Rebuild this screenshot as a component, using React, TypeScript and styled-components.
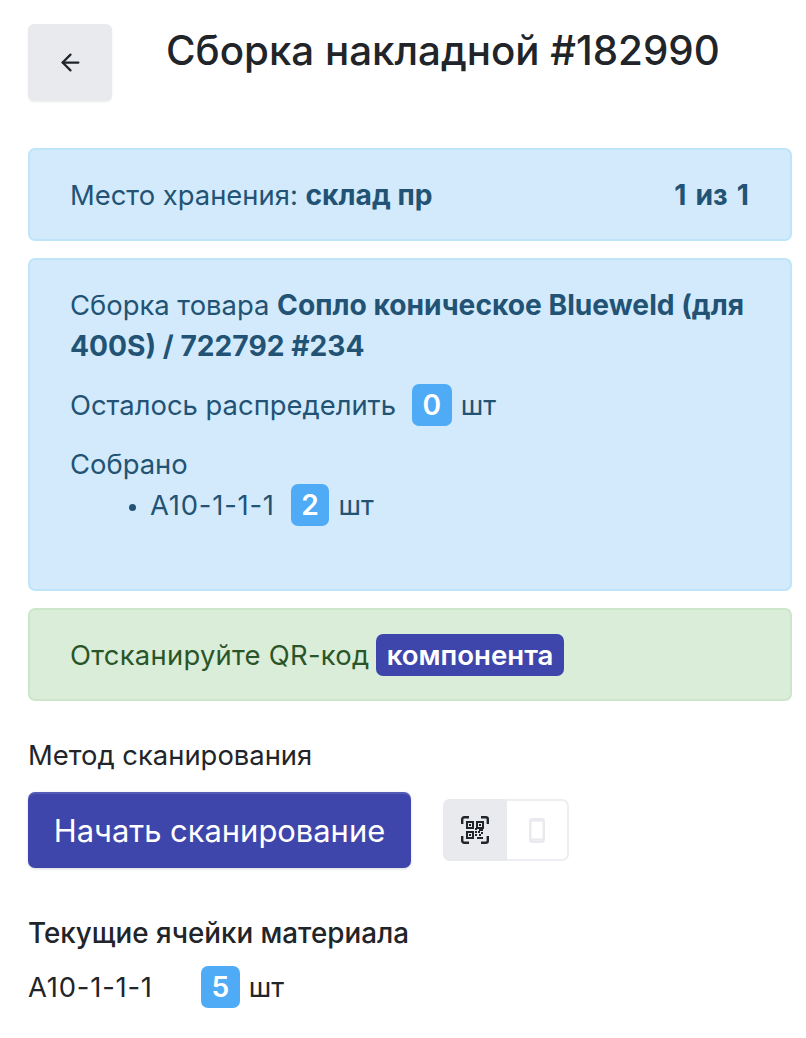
import React from 'react';
import styled, { createGlobalStyle } from 'styled-components';
import { ArrowLeft } from 'lucide-react';

const GlobalStyle = createGlobalStyle`
  html, body {
    margin: 0;
    padding: 0;
    background: #fff;
  }
  body {
    font-family: Inter, "Noto Sans", sans-serif;
    font-size: 27.4px;
    line-height: 41px;
    color: #212529;
  }
  b {
    font-size: 28.2px;
    line-height: 41px;
  }
`;

const Page = styled.div`
  padding: 24px 14px 30px 28px;
`;

const Header = styled.div`
  display: flex;
  align-items: flex-start;
  margin-bottom: 47px;
`;

const BackButton = styled.button`
  width: 84px;
  height: 77px;
  border: none;
  border-radius: 6px;
  background: #e9eaee;
  box-shadow: 0 1px 2px rgba(0, 0, 0, 0.08);
  color: #212529;
  display: flex;
  align-items: center;
  justify-content: center;
  padding: 0;
`;

const Title = styled.h1`
  margin: 0 0 0 54px;
  font-size: 40.3px;
  line-height: 54px;
  font-weight: 500;
  color: #212529;
`;

const Alert = styled.div<{ $tone: 'info' | 'success' }>`
  box-sizing: border-box;
  border-radius: 7px;
  border: 2px solid ${(p) => (p.$tone === 'info' ? '#bfe5fa' : '#cde6cb')};
  background: ${(p) => (p.$tone === 'info' ? '#d2eafb' : '#d9edd8')};
  color: ${(p) => (p.$tone === 'info' ? '#225375' : '#2a5528')};
  padding: 25px 41px 23px 40px;
  margin-bottom: 17px;
`;

const SuccessAlert = styled(Alert)`
  margin-bottom: 34px;
`;

const StorageRow = styled.div`
  display: flex;
  justify-content: space-between;
`;

const StorageCount = styled.b`
  word-spacing: 2.5px;
`;

const Line = styled.div`
  margin-bottom: 18px;
`;

const Cell = styled.span`
  letter-spacing: 0.8px;
`;

const Prompt = styled.span`
  letter-spacing: 0.27px;
  margin-right: -1px;
`;

const Badge = styled.span<{ $indigo?: boolean }>`
  display: inline-block;
  background: ${(p) => (p.$indigo ? '#3e46ab' : '#4fabf5')};
  color: #fff;
  font-size: ${(p) => (p.$indigo ? '27.6px' : '28.2px')};
  font-weight: 600;
  line-height: 42px;
  height: 42px;
  vertical-align: top;
  padding: 0 10.5px;
  border-radius: 7px;
  margin: -1px 9px 0 0;
`;

const Gathered = styled.ul`
  margin: 0 0 40px;
  padding-left: 80px;
  li::marker {
    font-size: 22px;
  }
`;

const Label = styled.div<{ $medium?: boolean }>`
  font-weight: ${(p) => (p.$medium ? 500 : 400)};
  font-size: ${(p) => (p.$medium ? '27.8px' : '27.4px')};
`;

const ScanRow = styled.div`
  display: flex;
  align-items: center;
  margin: 16px 0 45px;
`;

const ScanButton = styled.button`
  width: 383px;
  height: 76px;
  border: none;
  border-radius: 7px;
  background: #3e46ab;
  box-shadow: inset 0 2px 0 rgba(255, 255, 255, 0.12), 0 1px 3px rgba(0, 0, 0, 0.15);
  color: #fff;
  font: inherit;
  font-size: 30.9px;
  padding: 0;
`;

const Toggle = styled.div`
  display: flex;
  margin-left: 32px;
  width: 126px;
  height: 62px;
  box-sizing: border-box;
  border: 2px solid #eceef2;
  border-radius: 7px;
`;

const ToggleItem = styled.div<{ $active?: boolean }>`
  flex: ${(p) => (p.$active ? '0 0 64px' : '1')};
  margin: ${(p) => (p.$active ? '-2px 0 -2px -2px' : '0')};
  display: flex;
  align-items: center;
  justify-content: center;
  border-radius: 7px 0 0 7px;
  background: ${(p) => (p.$active ? '#e9eaee' : 'transparent')};
`;

const CellRow = styled.div`
  display: flex;
  align-items: center;
  margin-top: 13px;
`;

const CellName = styled(Cell)`
  width: 173px;
`;

const Gap = styled.span`
  display: inline-block;
  width: 16px;
`;

const QrIcon = () => (
  <svg width="28" height="28" viewBox="0 0 28 28" fill="none" stroke="#212529" strokeWidth="2.4">
    <path d="M1.2 8V3.2a2 2 0 0 1 2-2H8M20 1.2h4.8a2 2 0 0 1 2 2V8M26.8 20v4.8a2 2 0 0 1-2 2H20M8 26.8H3.2a2 2 0 0 1-2-2V20" />
    <g strokeWidth="2">
      <rect x="6" y="6" width="6" height="6" />
      <rect x="16" y="6" width="6" height="6" />
      <rect x="6" y="16" width="6" height="6" />
      <path d="M14 13h2M18 14h4M15 15v2M17 16h2M21 16v2M14 19h2M18 19h2M16 22h4M21 21v2" />
    </g>
    <g fill="#212529" stroke="none">
      <rect x="8" y="8" width="2" height="2" />
      <rect x="18" y="8" width="2" height="2" />
      <rect x="8" y="18" width="2" height="2" />
    </g>
  </svg>
);

const PhoneIcon = () => (
  <svg width="16" height="25" viewBox="0 0 16 25" fill="none">
    <rect x="1.25" y="1.25" width="13.5" height="22.5" rx="2" stroke="#e9eaee" strokeWidth="2.5" />
    <path d="M2 2.5h12M2 21.5h12" stroke="#e9eaee" strokeWidth="2" />
  </svg>
);

export default function App() {
  return (
    <Page>
      <GlobalStyle />
      <Header>
        <BackButton aria-label="Назад">
          <ArrowLeft size={27} strokeWidth={2} />
        </BackButton>
        <Title>Сборка накладной #182990</Title>
      </Header>

      <Alert $tone="info">
        <StorageRow>
          <span>
            Место хранения: <b>склад пр</b>
          </span>
          <StorageCount>1 из 1</StorageCount>
        </StorageRow>
      </Alert>

      <Alert $tone="info">
        <Line>
          Сборка товара <b>Сопло коническое Blueweld (для 400S) / 722792 #234</b>
        </Line>
        <Line>
          Осталось распределить
          <Gap />
          <Badge>0</Badge>шт
        </Line>
        <Label>Собрано</Label>
        <Gathered>
          <li>
            <Cell>А10-1-1-1</Cell>
            <Gap />
            <Badge>2</Badge>шт
          </li>
        </Gathered>
      </Alert>

      <SuccessAlert $tone="success">
        <Prompt>Отсканируйте QR-код</Prompt> <Badge $indigo>компонента</Badge>
      </SuccessAlert>

      <Label>Метод сканирования</Label>
      <ScanRow>
        <ScanButton>Начать сканирование</ScanButton>
        <Toggle>
          <ToggleItem $active>
            <QrIcon />
          </ToggleItem>
          <ToggleItem>
            <PhoneIcon />
          </ToggleItem>
        </Toggle>
      </ScanRow>

      <Label $medium>Текущие ячейки материала</Label>
      <CellRow>
        <CellName>А10-1-1-1</CellName>
        <Badge>5</Badge>
        <span>шт</span>
      </CellRow>
    </Page>
  );
}
